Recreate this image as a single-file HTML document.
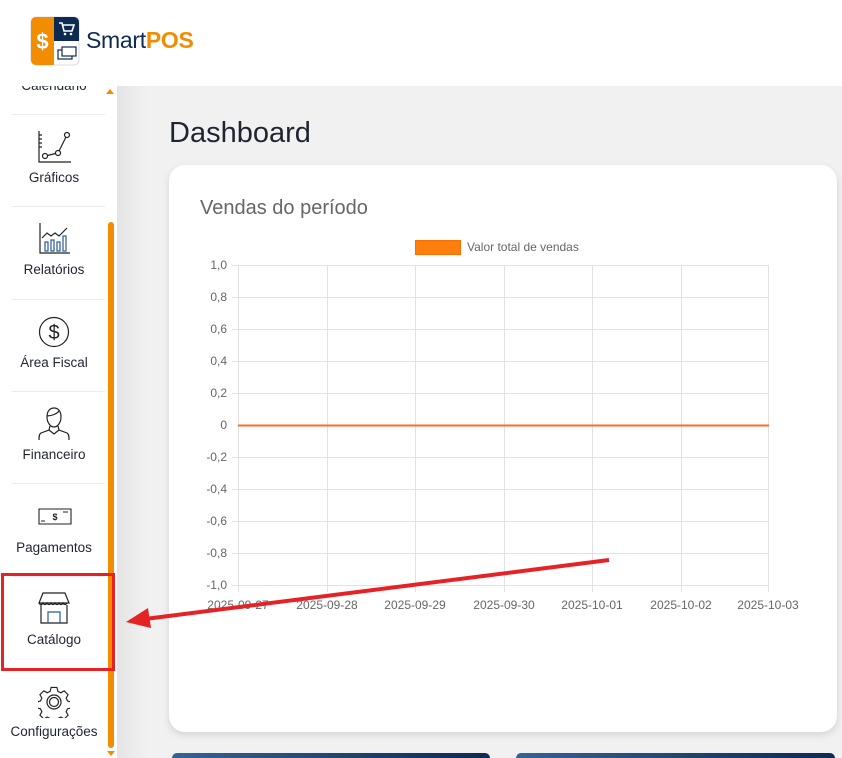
<!DOCTYPE html>
<html style="overflow:hidden;height:758px"><head><meta charset="utf-8"><style>
*{margin:0;padding:0;box-sizing:border-box}
body{width:842px;height:758px;overflow:hidden;background:#f1f1f1;font-family:"Liberation Sans",sans-serif;position:relative}
.a{position:absolute}
.lbl{position:absolute;left:0;width:108px;text-align:center;font-size:13.5px;color:#1f2430}
.sep{position:absolute;left:12px;width:93px;height:1px;background:#ececec}
.yl{position:absolute;width:40px;text-align:right;left:187px;font-size:12px;color:#666}
.xl{position:absolute;width:80px;text-align:center;font-size:12px;color:#666;top:598px}
</style></head><body>
<div class="a" style="left:0;top:0;width:842px;height:86px;background:#fff;z-index:3"></div>
<div class="a" style="left:117px;top:86px;width:30px;height:672px;background:linear-gradient(90deg,#e4e4e4,#f1f1f1)"></div>
<div class="a" style="left:0;top:86px;width:117px;height:672px;background:#fff"></div>
<svg class="a" style="left:30px;top:16px;z-index:4" width="50" height="50" viewBox="0 0 50 50">
<rect x="1" y="1" width="48" height="48" rx="5" fill="#fff" stroke="#ddd"/>
<path d="M6 1h18v48H6a5 5 0 0 1-5-5V6a5 5 0 0 1 5-5z" fill="#f28c00"/>
<path d="M24 1h20a5 5 0 0 1 5 5v19H24z" fill="#0d2a52"/>
<text x="12.5" y="33" font-size="22" font-weight="bold" fill="#fff" text-anchor="middle" font-family="Liberation Sans">$</text>
<path d="M29 7h3l2 8h8l2-6h-11" stroke="#fff" stroke-width="1.6" fill="none"/><circle cx="35" cy="18" r="1.3" fill="#fff"/><circle cx="41" cy="18" r="1.3" fill="#fff"/>
<rect x="28" y="34" width="14" height="9" fill="none" stroke="#0d2a52" stroke-width="1.2"/><rect x="32" y="31" width="14" height="9" fill="#fff" stroke="#0d2a52" stroke-width="1.2"/>
</svg>
<div class="a" style="left:86px;top:27px;font-size:23px;color:#0d2a52;z-index:4;letter-spacing:-0.3px">Smart<b style="color:#f28c00">POS</b></div>
<div class="lbl" style="top:78px;z-index:1">Calendário</div>
<div class="a" style="left:106px;top:89px;width:0;height:0;border-left:4px solid transparent;border-right:4px solid transparent;border-bottom:5px solid #f28c00;z-index:4"></div>
<div class="sep" style="top:114px"></div>
<div class="sep" style="top:206px"></div>
<div class="sep" style="top:299px"></div>
<div class="sep" style="top:391px"></div>
<div class="sep" style="top:483px"></div>
<div class="sep" style="top:576px"></div>
<div class="sep" style="top:668px"></div>
<div class="a" style="left:108px;top:222px;width:6px;height:526px;background:#f28c00;border-radius:3px"></div>
<div class="a" style="left:107px;top:751px;width:0;height:0;border-left:4px solid transparent;border-right:4px solid transparent;border-top:5px solid #f28c00"></div>
<svg class="a" style="left:36px;top:130px" width="36" height="34" viewBox="0 0 36 34" fill="none" stroke="#222" stroke-width="1.2"><path d="M3 1v31h32"/><path d="M3 5h3M3 9h3M3 13h3M3 17h3"/><circle cx="9" cy="26" r="2.5"/><circle cx="22" cy="23" r="2.5"/><circle cx="31" cy="5" r="2.5"/><path d="M11.5 25.5l8-2M23 21l7-14"/></svg>
<div class="lbl" style="top:170px">Gráficos</div>
<svg class="a" style="left:37px;top:222px" width="34" height="32" viewBox="0 0 34 32" fill="none" stroke="#222" stroke-width="1.2"><path d="M3 1v30h30"/><path d="M5 16l5-5 4 3 4-3 4 3 8-8" stroke="#222"/><rect x="8" y="20" width="3" height="9" stroke="#2a5a9a"/><rect x="14" y="18" width="3" height="11" stroke="#2a5a9a"/><rect x="20" y="20" width="3" height="9" stroke="#2a5a9a"/><rect x="26" y="14" width="3" height="15" stroke="#2a5a9a"/></svg>
<div class="lbl" style="top:262px">Relatórios</div>
<svg class="a" style="left:38px;top:316px" width="32" height="32" viewBox="0 0 32 32" fill="none" stroke="#222" stroke-width="1.2"><circle cx="16" cy="16" r="14.5"/><text x="16" y="23" font-size="20" text-anchor="middle" fill="#222" stroke="none" font-family="Liberation Sans">$</text></svg>
<div class="lbl" style="top:355px">Área Fiscal</div>
<svg class="a" style="left:38px;top:407px" width="32" height="34" viewBox="0 0 32 34" fill="none" stroke="#222" stroke-width="1.2"><path d="M9 10c0-6 3-9 7-9s7 3 7 9c0 5-3 10-7 10s-7-5-7-10z"/><path d="M9 9c4 0 10-2 12-5"/><path d="M12 19l-1 4-8 3c-2 1-2 4-2 7M20 19l1 4 8 3c2 1 2 4 2 7M11 23l5 4 5-4"/></svg>
<div class="lbl" style="top:447px">Financeiro</div>
<svg class="a" style="left:38px;top:506px" width="34" height="20" viewBox="0 0 34 20" fill="none" stroke="#222" stroke-width="1.1"><path d="M1 3h32v15H1z"/><path d="M3 15h4M25 6h5"/><text x="17" y="14" font-size="9" font-weight="bold" text-anchor="middle" fill="#222" stroke="none" font-family="Liberation Sans">$</text></svg>
<div class="lbl" style="top:540px">Pagamentos</div>
<svg class="a" style="left:38px;top:592px" width="32" height="32" viewBox="0 0 32 32" fill="none" stroke="#222" stroke-width="1.2"><path d="M5 1h22l4 10H1z"/><path d="M1 11c1 2 3 2 4 0 1 2 3 2 4 0 1 2 3 2 4 0 1 2 3 2 4 0 1 2 3 2 4 0 1 2 3 2 4 0 1 2 3 2 4 0"/><path d="M3 13v18h26V13"/><path d="M10 31V20h12v11" stroke="#2a5a9a"/></svg>
<div class="lbl" style="top:632px">Catálogo</div>
<div class="a" style="left:1px;top:573px;width:114px;height:98px;border:3px solid #e52226"></div>
<svg class="a" style="left:38px;top:686px" width="32" height="32" viewBox="0 0 32 32" fill="none" stroke="#222" stroke-width="1.2"><path d="M13 1h6l1 4 3 1.5 3.5-2 4 4-2 3.5 1.5 3 4 1v6l-4 1-1.5 3 2 3.5-4 4-3.5-2-3 1.5-1 4h-6l-1-4-3-1.5-3.5 2-4-4 2-3.5-1.5-3-4-1v-6l4-1 1.5-3-2-3.5 4-4 3.5 2 3-1.5z" transform="scale(0.97) translate(0.5 0.5)"/><circle cx="16" cy="16" r="7"/><circle cx="16" cy="16" r="4.5"/></svg>
<div class="lbl" style="top:724px">Configurações</div>
<div class="a" style="left:169px;top:117px;font-size:29px;color:#1f2430">Dashboard</div>
<div class="a" style="left:169px;top:165px;width:668px;height:567px;background:#fff;border-radius:16px;box-shadow:0 3px 8px rgba(0,0,0,.12)"></div>
<div class="a" style="left:200px;top:197px;font-size:20px;color:#666">Vendas do período</div>
<div class="a" style="left:415px;top:240px;width:46px;height:15px;background:#ff7f0e;border:1px solid #ff6d00"></div>
<div class="a" style="left:467px;top:240px;font-size:12px;color:#666">Valor total de vendas</div>
<svg class="a" style="left:0;top:0" width="842" height="758">
<g stroke="#e2e2e2" stroke-width="1">
<path d="M238.5 265v327M327.5 265v327M415.5 265v327M504.5 265v327M592.5 265v327M681.5 265v327M768.5 265v327"/>
<path d="M232 265.5h537M232 297.5h537M232 329.5h537M232 361.5h537M232 393.5h537M232 457.5h537M232 489.5h537M232 521.5h537M232 553.5h537M232 585.5h537"/>
</g>
<path d="M238 425.5h531" stroke="#ff6d1a" stroke-width="2"/>
</svg>
<div class="yl" style="top:258px">1,0</div><div class="yl" style="top:290px">0,8</div><div class="yl" style="top:322px">0,6</div><div class="yl" style="top:354px">0,4</div><div class="yl" style="top:386px">0,2</div><div class="yl" style="top:418px">0</div><div class="yl" style="top:450px">-0,2</div><div class="yl" style="top:482px">-0,4</div><div class="yl" style="top:514px">-0,6</div><div class="yl" style="top:546px">-0,8</div><div class="yl" style="top:578px">-1,0</div>
<div class="xl" style="left:198px">2025-09-27</div><div class="xl" style="left:287px">2025-09-28</div><div class="xl" style="left:375px">2025-09-29</div><div class="xl" style="left:464px">2025-09-30</div><div class="xl" style="left:552px">2025-10-01</div><div class="xl" style="left:641px">2025-10-02</div><div class="xl" style="left:728px">2025-10-03</div>
<svg class="a" style="left:0;top:0" width="842" height="758"><path d="M609 560L145 619" stroke="#e52226" stroke-width="4"/><path d="M126 622l22-14 3 20z" fill="#e52226"/></svg>
<div class="a" style="left:172px;top:753px;width:318px;height:5px;border-radius:12px 12px 0 0;background:linear-gradient(90deg,#356393,#0d2a52)"></div>
<div class="a" style="left:516px;top:753px;width:319px;height:5px;border-radius:12px 12px 0 0;background:linear-gradient(90deg,#356393,#0d2a52)"></div>
</body></html>
